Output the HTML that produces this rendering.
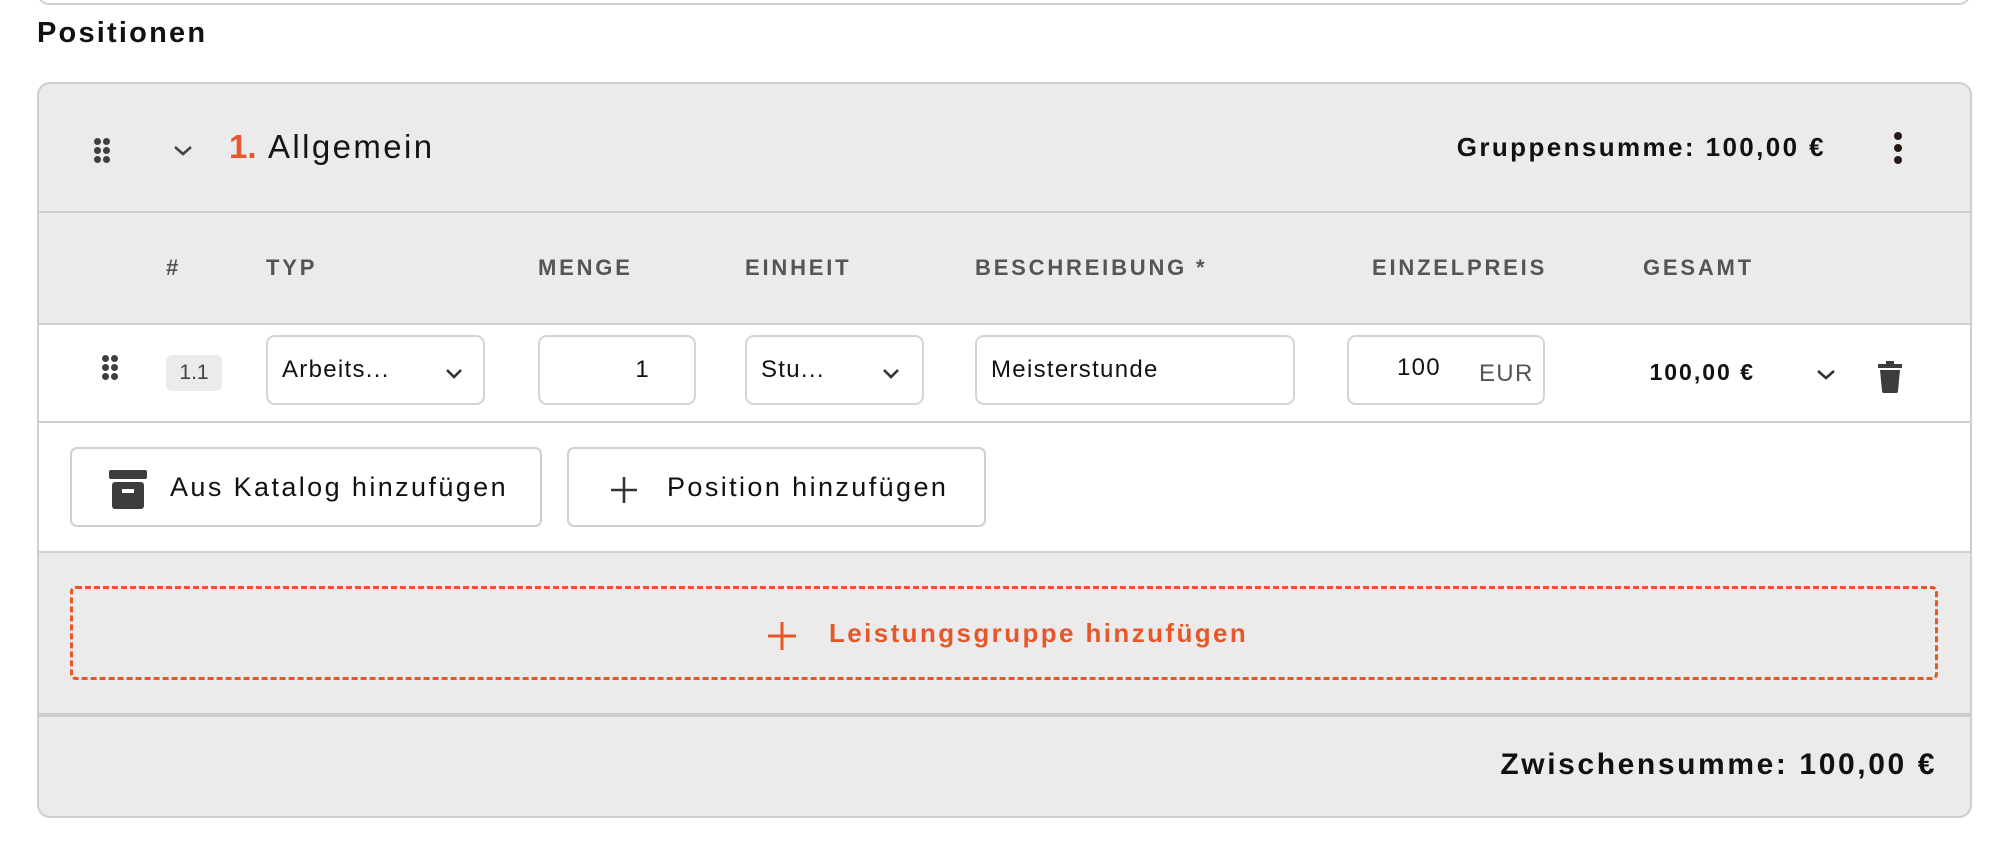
<!DOCTYPE html>
<html><head><meta charset="utf-8"><style>
*{box-sizing:border-box;margin:0;padding:0}
body{width:1998px;height:842px;background:#fff;position:relative;overflow:hidden;font-family:"Liberation Sans",sans-serif;color:#111}
.a{position:absolute;white-space:nowrap}
.prev{left:37px;top:-20px;width:1934px;height:25px;border:2px solid #d0d0d0;border-top:none;border-radius:0 0 12px 12px}
.card{left:37px;top:82px;width:1935px;height:736px;border:2px solid #cfcfcf;border-radius:13px;background:#ebebeb;overflow:hidden}
.hl{font-size:22px;font-weight:bold;color:#555;letter-spacing:2.8px;top:255px}
.inp{position:absolute;top:335px;height:70px;border:2px solid #d4d4d4;border-radius:9px;background:#fff;font-size:24px;letter-spacing:1.3px;line-height:66px;padding-left:14px;white-space:nowrap}
.btn{position:absolute;top:447px;height:80px;border:2px solid #d0d0d0;border-radius:7px;background:#fff;font-size:27px;letter-spacing:2.4px;line-height:76px}
.dots{position:absolute}
.dots i{position:absolute;width:7px;height:7px;border-radius:50%;background:#3f3f3f}
</style></head><body>
<div class="a prev"></div>
<div class="a" style="left:37px;top:17px;font-size:29px;font-weight:bold;letter-spacing:2.2px">Positionen</div>

<div class="a card"></div>
<div class="a" style="left:39px;top:324px;width:1931px;height:228px;background:#fff"></div>
<div class="a" style="left:39px;top:211px;width:1931px;height:2px;background:#cfcfcf"></div>
<div class="a" style="left:39px;top:323px;width:1931px;height:2px;background:#cfcfcf"></div>
<div class="a" style="left:39px;top:421px;width:1931px;height:2px;background:#cfcfcf"></div>
<div class="a" style="left:39px;top:551px;width:1931px;height:2px;background:#cfcfcf"></div>
<div class="a" style="left:39px;top:713px;width:1931px;height:4px;background:#cccccc"></div>

<!-- header -->
<div class="dots" style="left:94px;top:138px"><i style="left:0;top:0"></i><i style="left:9px;top:0"></i><i style="left:0;top:9px"></i><i style="left:9px;top:9px"></i><i style="left:0;top:18px"></i><i style="left:9px;top:18px"></i></div>
<svg class="a" style="left:172px;top:144px" width="22" height="13" viewBox="0 0 22 13"><path d="M3 3l8 7 8-7" fill="none" stroke="#444" stroke-width="2.6"/></svg>
<div class="a" style="left:229px;top:128px;font-size:33px;font-weight:bold;color:#e8572a">1.</div>
<div class="a" style="left:268px;top:128px;font-size:33px;letter-spacing:2.4px;color:#151515">Allgemein</div>
<div class="a" style="left:1300px;top:132px;width:1826px;text-align:right;font-size:26px;font-weight:bold;letter-spacing:2.4px;left:0;width:1826px">Gruppensumme: 100,00 €</div>
<div class="dots" style="left:1894px;top:132px"><i style="left:0;top:0;width:8px;height:8px;background:#2b1a14"></i><i style="left:0;top:12px;width:8px;height:8px;background:#2b1a14"></i><i style="left:0;top:24px;width:8px;height:8px;background:#2b1a14"></i></div>

<!-- column headers -->
<div class="a hl" style="left:166px">#</div>
<div class="a hl" style="left:266px">TYP</div>
<div class="a hl" style="left:538px">MENGE</div>
<div class="a hl" style="left:745px">EINHEIT</div>
<div class="a hl" style="left:975px">BESCHREIBUNG *</div>
<div class="a hl" style="left:1372px">EINZELPREIS</div>
<div class="a hl" style="left:1643px">GESAMT</div>

<!-- row -->
<div class="dots" style="left:102px;top:355px"><i style="left:0;top:0"></i><i style="left:9px;top:0"></i><i style="left:0;top:9px"></i><i style="left:9px;top:9px"></i><i style="left:0;top:18px"></i><i style="left:9px;top:18px"></i></div>
<div class="a" style="left:166px;top:355px;width:56px;height:36px;background:#ebebeb;border-radius:6px;font-size:21px;line-height:36px;text-align:center;color:#444">1.1</div>
<div class="inp" style="left:266px;width:219px">Arbeits...<svg class="a" style="left:177px;top:31px" width="18" height="12" viewBox="0 0 18 12"><path d="M2 2l7 7 7-7" fill="none" stroke="#333" stroke-width="2.6"/></svg></div>
<div class="inp" style="left:538px;width:158px;text-align:right;padding-right:44px">1</div>
<div class="inp" style="left:745px;width:179px">Stu...<svg class="a" style="left:135px;top:31px" width="18" height="12" viewBox="0 0 18 12"><path d="M2 2l7 7 7-7" fill="none" stroke="#333" stroke-width="2.6"/></svg></div>
<div class="inp" style="left:975px;width:320px">Meisterstunde</div>
<div class="inp" style="left:1347px;width:198px"><span class="a" style="left:48px;top:-2px">100</span><span class="a" style="left:130px;top:4px;color:#555">EUR</span></div>
<div class="a" style="left:1600px;top:357px;width:155px;font-size:23px;font-weight:bold;letter-spacing:2px;line-height:30px;text-align:right">100,00 €</div>
<svg class="a" style="left:1816px;top:369px" width="20" height="12" viewBox="0 0 20 12"><path d="M2 2l8 7 8-7" fill="none" stroke="#333" stroke-width="2.6"/></svg>
<svg class="a" style="left:1877px;top:361px" width="26" height="32" viewBox="0 0 26 32"><rect x="1" y="3" width="24" height="4" fill="#3d3d3d"/><rect x="9" y="0" width="8" height="4" fill="#3d3d3d"/><path d="M3 9h20l-2 21a2 2 0 0 1-2 2H7a2 2 0 0 1-2-2z" fill="#3d3d3d"/></svg>

<!-- buttons -->
<div class="btn" style="left:70px;width:472px"><svg class="a" style="left:36px;top:20px" width="40" height="40" viewBox="0 0 40 40"><rect x="1" y="1" width="38" height="9" rx="2" fill="#3d3d3d"/><rect x="4" y="13" width="32" height="27" rx="3" fill="#3d3d3d"/><rect x="14" y="20" width="12" height="4" fill="#fff"/></svg><span class="a" style="left:98px">Aus Katalog hinzufügen</span></div>
<div class="btn" style="left:567px;width:419px"><svg class="a" style="left:40px;top:26px" width="30" height="30" viewBox="0 0 30 30"><path d="M15 2v26M2 15h26" stroke="#333" stroke-width="2.6"/></svg><span class="a" style="left:98px">Position hinzufügen</span></div>

<!-- dashed -->
<div class="a" style="left:70px;top:586px;width:1868px;height:94px;border:3px dashed #e8572a;border-radius:6px"></div>
<svg class="a" style="left:767px;top:621px" width="30" height="30" viewBox="0 0 30 30"><path d="M15 1v28M1 15h28" stroke="#e8572a" stroke-width="3"/></svg>
<div class="a" style="left:829px;top:618px;font-size:26px;font-weight:bold;color:#e8572a;letter-spacing:2.4px">Leistungsgruppe hinzufügen</div>

<!-- footer -->
<div class="a" style="left:0;top:748px;width:1937px;text-align:right;font-size:30px;font-weight:bold;letter-spacing:2.6px">Zwischensumme: 100,00 €</div>
</body></html>
